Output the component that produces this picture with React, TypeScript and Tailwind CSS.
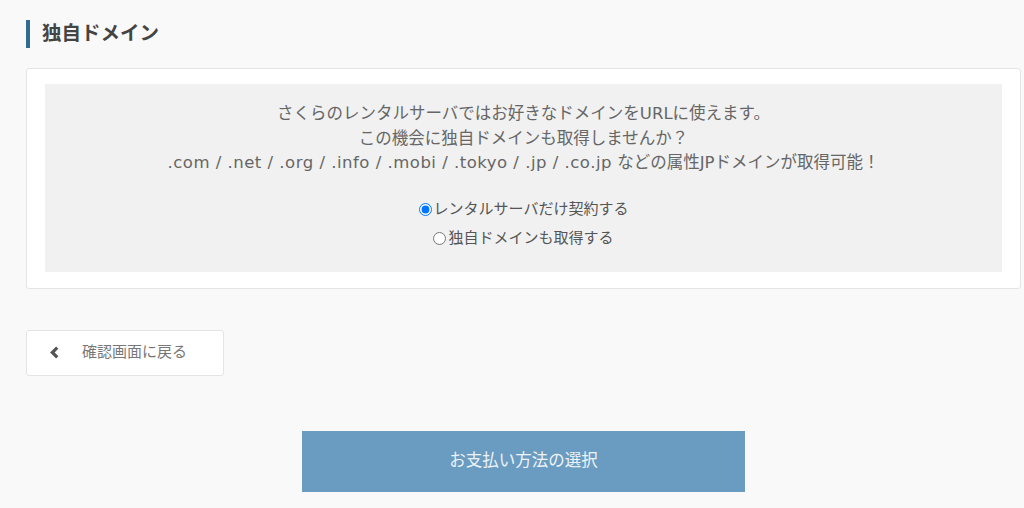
import { useState } from 'react'

const FONT = "font-['DejaVu_Sans','Noto_Sans_CJK_JP',sans-serif]"

function RadioOption({
  label,
  checked,
  onSelect
}: {
  label: string
  checked: boolean
  onSelect: () => void
}) {
  return (
    <label className="flex h-[29px] cursor-pointer items-center justify-center">
      <input
        type="radio"
        name="domain"
        checked={checked}
        onChange={onSelect}
        className="m-0 mr-[2px] size-[13px] accent-[#0075ff]"
      />
      <span>{label}</span>
    </label>
  )
}

export default function App() {
  const [choice, setChoice] = useState<'server' | 'domain'>('server')

  return (
    <div className={`min-h-screen bg-[#f9f9f9] pt-[20px] pl-[26px] ${FONT}`}>
      <h2 className="flex h-[28px] items-center border-l-4 border-[#2f6b93] pl-[12px] text-[19.5px] leading-none font-bold text-[#444]">
        独自ドメイン
      </h2>

      <div className="mt-[20px] w-[995px] rounded-[3px] border border-[#e4e4e4] bg-white px-[18px] pt-[15px] pb-[16px]">
        <div className="bg-[#f1f1f1] px-4 pt-[18px] pb-[19px] text-center text-[16.5px] text-[#666]">
          <p className="leading-[24.5px]">
            さくらのレンタルサーバではお好きなドメインをURLに使えます。
          </p>
          <p className="leading-[24.5px]">
            この機会に独自ドメインも取得しませんか？
          </p>
          <p className="leading-[24.5px]">
            <span className="tracking-[0.5px]">
              .com / .net / .org / .info / .mobi / .tokyo / .jp / .co.jp
            </span>{' '}
            などの属性JPドメインが取得可能！
          </p>

          <div className="mt-[19px] text-[15px] text-[#555]">
            <RadioOption
              label="レンタルサーバだけ契約する"
              checked={choice === 'server'}
              onSelect={() => setChoice('server')}
            />
            <RadioOption
              label="独自ドメインも取得する"
              checked={choice === 'domain'}
              onSelect={() => setChoice('domain')}
            />
          </div>
        </div>
      </div>

      <button className="mt-[41px] flex h-[46px] w-[198px] items-center rounded-[3px] border border-[#e4e4e4] bg-white pl-[21px] text-[15px] text-[#777]">
        <svg
          className="size-[13px]"
          viewBox="0 0 12 12"
          fill="none"
          stroke="#555"
          strokeWidth="3"
          strokeLinecap="square"
        >
          <path d="M7.5 2.5 4 6l3.5 3.5" />
        </svg>
        <span className="ml-[21px]">確認画面に戻る</span>
      </button>

      <div className="flex w-[995px] justify-center">
        <button className="mt-[55px] h-[61px] w-[443px] bg-[#6a9bc0] text-[16.5px] text-[#eef3f8]">
          お支払い方法の選択
        </button>
      </div>
    </div>
  )
}
